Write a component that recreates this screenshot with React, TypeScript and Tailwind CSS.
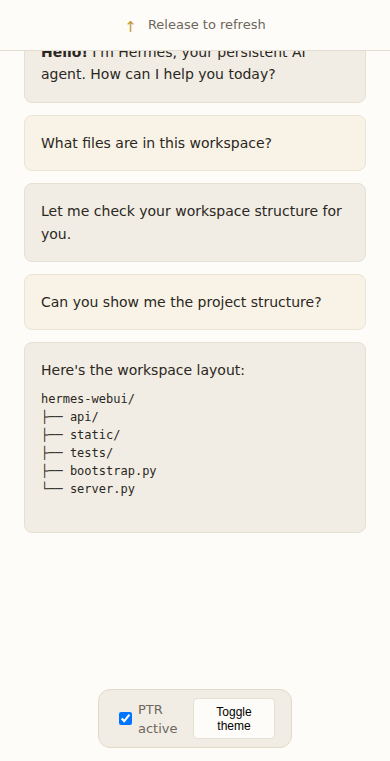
export default function App() {
  const tree = `hermes-webui/
├── api/
├── static/
├── tests/
├── bootstrap.py
└── server.py`

  return (
    <div className="min-h-[761px] bg-[#fdfcf8] text-[#2a2722] font-['DejaVu_Sans',sans-serif]">
      {/* pull-to-refresh indicator */}
      <div className="fixed top-0 left-0 right-0 z-10 h-[51px] bg-[#fdfcf8] border-b border-[#e4ddcf] flex items-center justify-center gap-[11px]">
        <span className="text-[15px] leading-none mt-[4px] text-[#c4972f]">↑</span>
        <span className="text-[13px] text-[#6e675d]">Release to refresh</span>
      </div>

      <div className="px-6 pt-[24px] flex flex-col gap-3 text-[14px] leading-[1.6]">
        <div className="rounded-lg border border-[#e6e0d3] bg-[#f1ede4] p-4">
          <b>Hello!</b> I'm Hermes, your persistent AI agent. How can I help you today?
        </div>
        <div className="rounded-lg border border-[#ece4d3] bg-[#f9f3e7] p-4">What files are in this workspace?</div>
        <div className="rounded-lg border border-[#e6e0d3] bg-[#f1ede4] p-4">Let me check your workspace structure for you.</div>
        <div className="rounded-lg border border-[#ece4d3] bg-[#f9f3e7] p-4">Can you show me the project structure?</div>
        <div className="rounded-lg border border-[#e6e0d3] bg-[#f1ede4] p-4">
          <p>Here's the workspace layout:</p>
          <pre className="mt-2 mb-[18px] font-['DejaVu_Sans_Mono',monospace] text-[12px] leading-[18px]">{tree}</pre>
        </div>
      </div>

      {/* debug controls */}
      <div className="fixed bottom-[13px] left-0 right-0 flex justify-center">
        <div className="flex items-center gap-2 rounded-xl border border-[#e2dac9] bg-[#f1ede4] px-4 py-2">
          <label className="flex items-center gap-[6px] text-[13px] leading-[19px] text-[#6e675d]">
            <input type="checkbox" defaultChecked className="ml-1 w-[13px] h-[13px] accent-[#0075ff]" />
            <span className="w-[47px]">PTR active</span>
          </label>
          <button className="w-[82px] h-[41px] rounded border border-[#e6e0d3] bg-[#fdfcf8] px-[10px] text-[12px] leading-[14px] text-black font-['Liberation_Sans',sans-serif]">
            Toggle theme
          </button>
        </div>
      </div>
    </div>
  )
}
